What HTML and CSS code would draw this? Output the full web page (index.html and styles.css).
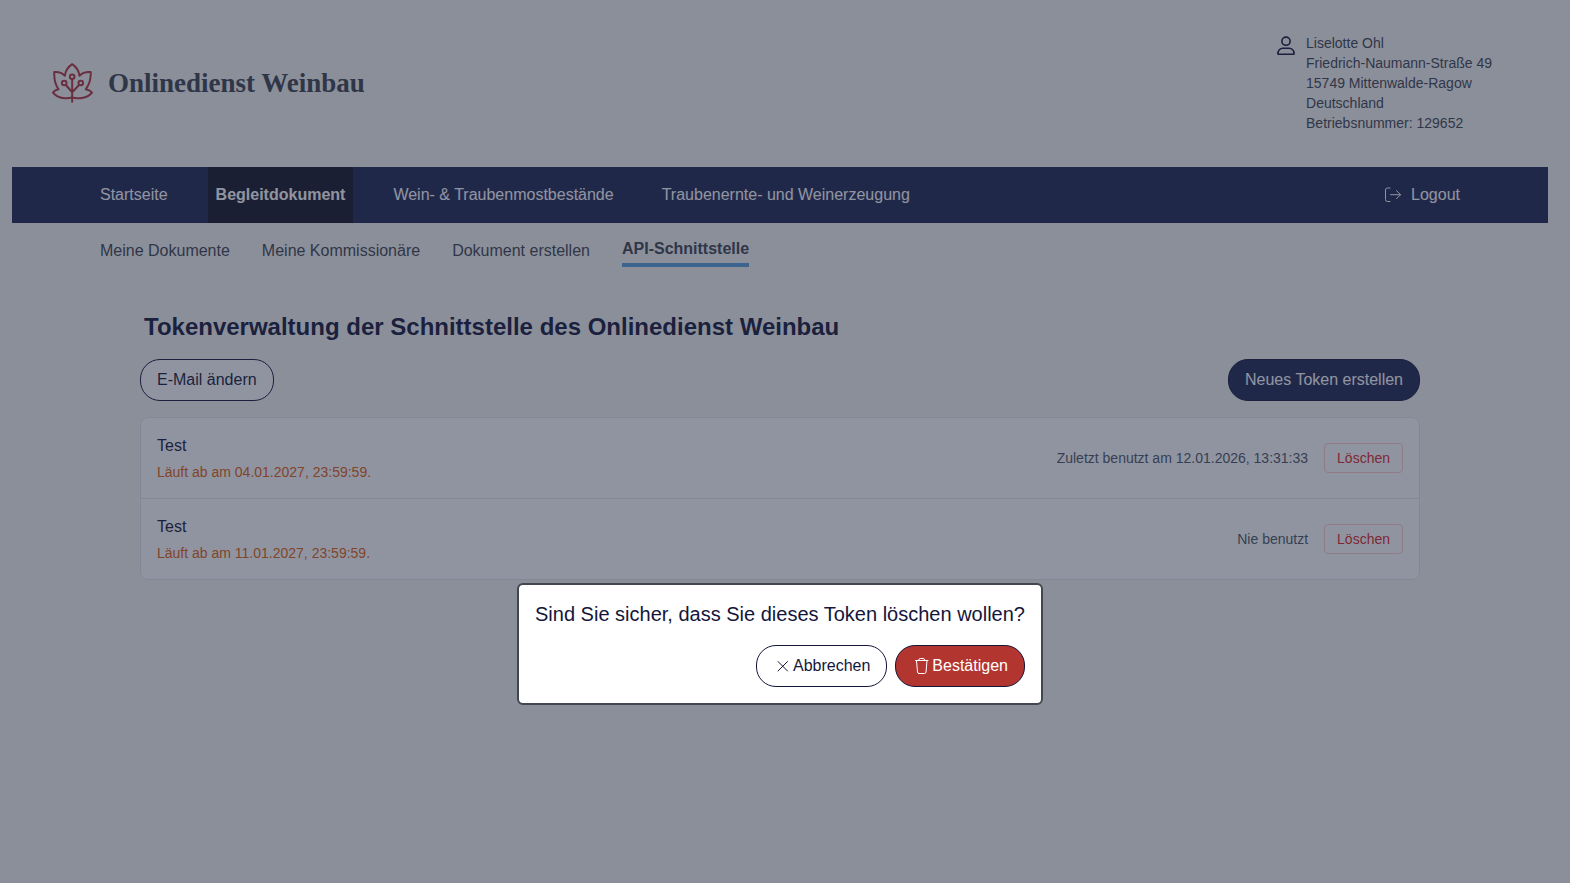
FILE: index.html
```
<!DOCTYPE html>
<html lang="de">
<head>
    <meta charset="utf-8">
    <title>Onlinedienst Weinbau</title>
    <link rel="stylesheet" href="styles.css">
</head>

<body>

<header class="header">
    <a class="brand" href="#">
        <svg class="brand-logo" viewBox="0 0 124 120" fill="none" stroke="currentColor" stroke-width="6" stroke-linejoin="round" stroke-linecap="round">
            <path d="M61 104C46 108 18 108 3 89C7 83 12 80 20 79C10 66 6 47 7 27C18 26 30 29 39 38C41 23 49 11 61 3C73 11 81 23 83 38C92 29 104 26 117 27C118 47 112 66 102 79C110 80 116 83 121 89C106 108 76 108 61 104Z"/>
            <path d="M61 117V49M61 88L42 66M61 88L82 66"/>
            <circle cx="61" cy="41" r="7"/>
            <circle cx="37" cy="60" r="7"/>
            <circle cx="87" cy="60" r="7"/>
        </svg>
        <span class="brand-name">Onlinedienst Weinbau</span>
    </a>
    <div class="user">
        <svg class="user-icon" viewBox="0 0 20 20" fill="none" stroke="currentColor" stroke-width="1.6">
            <circle cx="10" cy="5.2" r="4.1"/>
            <path d="M2 18.2c-.4-3.700 2.200-6 5-6h6c2.800 0 5.400 2.300 5 6z" stroke-linejoin="round"/>
        </svg>
        <address class="user-address">
            Liselotte Ohl<br>
            Friedrich-Naumann-Straße 49<br>
            15749 Mittenwalde-Ragow<br>
            Deutschland<br>
            Betriebsnummer: 129652
        </address>
    </div>
</header>

<nav class="nav">
    <a class="nav-link" href="#">Startseite</a>
    <a class="nav-link active" href="#">Begleitdokument</a>
    <a class="nav-link" href="#">Wein- &amp; Traubenmostbestände</a>
    <a class="nav-link" href="#">Traubenernte- und Weinerzeugung</a>
    <a class="nav-link logout" href="#">
        <svg class="logout-icon" viewBox="0 0 18 18" fill="none" stroke="currentColor" stroke-linecap="round" stroke-linejoin="round">
            <path d="M6 2H3.500Q1.500 2 1.500 4V13.500Q1.500 15.500 3.500 15.500H6M6.500 8.700H16.500M12.500 4.700L16.500 8.700L12.500 12.700"/>
        </svg>
        Logout
    </a>
</nav>

<nav class="subnav">
    <a class="subnav-link" href="#">Meine Dokumente</a>
    <a class="subnav-link" href="#">Meine Kommissionäre</a>
    <a class="subnav-link" href="#">Dokument erstellen</a>
    <a class="subnav-link active" href="#">API-Schnittstelle</a>
</nav>

<main class="content">
    <h1>Tokenverwaltung der Schnittstelle des Onlinedienst Weinbau</h1>

    <div class="toolbar">
        <button class="button" type="button">E-Mail ändern</button>
        <button class="button primary" type="button">Neues Token erstellen</button>
    </div>

    <ul class="tokens">
        <li class="token">
            <div>
                <div class="token-name">Test</div>
                <div class="token-expiry">Läuft ab am 04.01.2027, 23:59:59.</div>
            </div>
            <div class="token-side">
                <span>Zuletzt benutzt am 12.01.2026, 13:31:33</span>
                <button class="delete" type="button">Löschen</button>
            </div>
        </li>
        <li class="token">
            <div>
                <div class="token-name">Test</div>
                <div class="token-expiry">Läuft ab am 11.01.2027, 23:59:59.</div>
            </div>
            <div class="token-side">
                <span>Nie benutzt</span>
                <button class="delete" type="button">Löschen</button>
            </div>
        </li>
    </ul>
</main>

<div class="backdrop"></div>

<dialog class="dialog" aria-labelledby="dialog-title" open>
    <p class="dialog-title" id="dialog-title">Sind Sie sicher, dass Sie dieses Token löschen wollen?</p>
    <div class="dialog-buttons">
        <button class="button" type="button">
            <svg class="button-icon" viewBox="0 0 20 20" fill="none" stroke="currentColor" stroke-linecap="round">
                <path d="M5 5.500L14.500 15M14.500 5.500L5 15"/>
            </svg>Abbrechen
        </button>
        <button class="button danger" type="button">
            <svg class="button-icon" viewBox="0 0 20 20" fill="none" stroke="currentColor" stroke-linecap="round" stroke-linejoin="round">
                <path d="M3.500 4.500H16M6.500 4.500Q6.500 2.500 8.500 2.500H11Q13 2.500 13 4.500M4.500 4.500L5.500 16Q5.700 17.500 7 17.500H12.500Q13.800 17.500 14 16L15 4.500"/>
            </svg>Bestätigen
        </button>
    </div>
</dialog>

</body>
</html>
```
FILE: styles.css
```
* {
    box-sizing: border-box;
}

body {
    margin: 0;
    padding: 0 22px 0 12px;
    min-height: 100vh;
    background: #f5f5f1;
    color: #14163a;
    font-family: 'Liberation Sans', Arial, sans-serif;
    font-size: 16px;
    line-height: 24px;
}

a {
    color: inherit;
    text-decoration: none;
}

.header {
    display: flex;
    justify-content: space-between;
    align-items: center;
    padding: 33px 56px 34px 40px;
    color: #3d434f;
}

.brand {
    display: flex;
    align-items: center;
    gap: 15px;
}

.brand-logo {
    width: 41px;
    height: 40px;
    color: #b0353a;
}

.brand-name {
    font-family: 'Liberation Serif', serif;
    font-size: 27px;
    font-weight: bold;
    line-height: 32px;
}

.user {
    display: flex;
    align-items: flex-start;
    gap: 10px;
}

.user-icon {
    width: 20px;
    height: 20px;
    margin-top: 3px;
    color: #14163a;
}

.user-address {
    font-size: 14px;
    font-style: normal;
    line-height: 20px;
}

.nav {
    display: flex;
    gap: 32px;
    padding: 0 80px;
    background: #1f2653;
    color: #fff;
}

.nav-link {
    padding: 16px 8px;
}

.nav-link.active {
    background: #151427;
    font-weight: bold;
}

.logout {
    display: flex;
    align-items: center;
    gap: 9px;
    margin-left: auto;
}

.logout-icon {
    width: 18px;
    height: 18px;
}

.subnav {
    display: flex;
    align-items: center;
    gap: 32px;
    padding: 14px 88px 13px;
    color: #3d434f;
}

.subnav-link {
    padding-bottom: 2px;
}

.subnav-link.active {
    border-bottom: 4px solid #549fdb;
    font-weight: bold;
}

.content {
    max-width: 1280px;
    margin: 0 auto;
    padding-top: 31px;
}

h1 {
    margin: 0 4px 16px;
    font-size: 24px;
    line-height: 32px;
}

.toolbar {
    display: flex;
    justify-content: space-between;
    margin-bottom: 16px;
}

.button {
    display: flex;
    align-items: center;
    padding: 8px 16px;
    border: 1px solid #14163a;
    border-radius: 20px;
    background: #fff;
    color: #14163a;
    font: inherit;
    cursor: pointer;
}

.button.primary {
    background: #1f2653;
    color: #fff;
}

.button.danger {
    background: #b23530;
    color: #fff;
}

.button-icon {
    width: 20px;
    height: 20px;
}

.tokens {
    margin: 0;
    padding: 0;
    border: 1px solid #e5e7eb;
    border-radius: 8px;
    background: #fff;
    list-style: none;
}

.token {
    display: flex;
    justify-content: space-between;
    align-items: center;
    padding: 16px;
}

.token + .token {
    border-top: 1px solid #e5e7eb;
}

.token-expiry {
    margin-top: 4px;
    color: #e0600c;
    font-size: 14px;
    line-height: 20px;
}

.token-side {
    display: flex;
    align-items: center;
    gap: 16px;
    color: #4b5563;
    font-size: 14px;
    line-height: 20px;
}

.delete {
    padding: 4px 12px;
    border: 1px solid #fecaca;
    border-radius: 4px;
    background: #fff;
    color: #dc2626;
    font: inherit;
    cursor: pointer;
}

.backdrop {
    position: fixed;
    inset: 0;
    background: rgba(33, 42, 65, 0.5);
}

/* opens right below the token list */
.dialog {
    left: 0;
    right: 10px;
    width: fit-content;
    margin: 3px auto;
    padding: 16px;
    border: 2px solid #42464f;
    border-radius: 6px;
    background: #fff;
    color: #14163a;
}

.dialog-title {
    margin: 0 0 18px;
    font-size: 20px;
    line-height: 26px;
}

.dialog-buttons {
    display: flex;
    justify-content: flex-end;
    gap: 8px;
}
```
